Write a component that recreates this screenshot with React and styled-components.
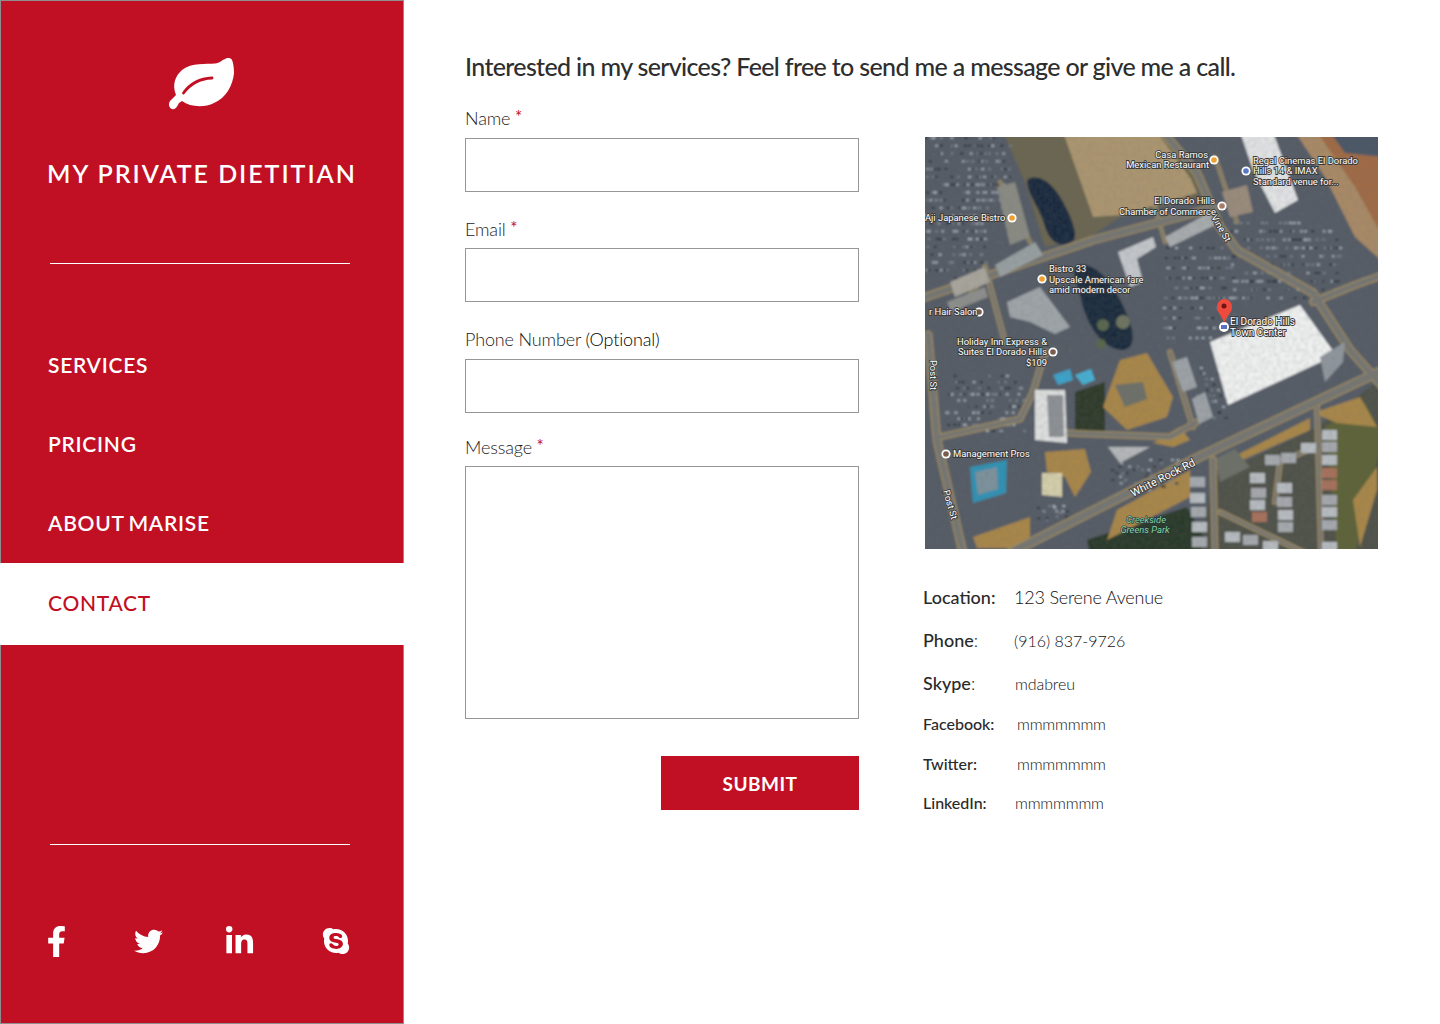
import React from "react";
import styled, { createGlobalStyle } from "styled-components";
import { FaFacebookF, FaTwitter, FaLinkedinIn, FaSkype } from "react-icons/fa";

const RED = "#c10f24";

const GlobalStyle = createGlobalStyle`
  html, body { margin: 0; padding: 0; background: #fff; }
  body { font-family: Lato, "Liberation Sans", sans-serif; color: #333; }
  * { box-sizing: border-box; }
`;

const Page = styled.div`
  display: flex;
  width: 1440px;
  height: 1024px;
  overflow: hidden;
`;

const Sidebar = styled.aside`
  width: 404px;
  height: 1024px;
  flex: none;
  display: flex;
  flex-direction: column;
  background: ${RED};
  border: 1px solid #8e8e8e;
  color: #fff;
`;

const Brand = styled.div`
  height: 262px;
  display: flex;
  flex-direction: column;
  align-items: center;
  padding-top: 56px;
`;

const BrandName = styled.h1`
  margin: 47px 0 0;
  font-size: 25px;
  line-height: 30px;
  font-weight: 600;
  letter-spacing: 1.95px;
  white-space: nowrap;
`;

const Divider = styled.hr`
  width: 300px;
  height: 1px;
  margin: 0 0 0 49px;
  border: 0;
  background: #fff;
  flex: none;
`;

const Nav = styled.nav`
  display: flex;
  flex-direction: column;
  margin-top: 62px;
  margin-bottom: 199px;
`;

const NavItem = styled.a`
  display: flex;
  align-items: center;
  height: ${(p) => (p.$active ? 82 : 79)}px;
  margin: ${(p) => (p.$active ? "0 -1px" : "0")};
  padding: ${(p) => (p.$active ? "0 0 4px 48px" : "0 0 3px 47px")};
  font-size: 21px;
  font-weight: ${(p) => (p.$active ? 500 : 600)};
  letter-spacing: 0.72px;
  word-spacing: -1.5px;
  color: ${(p) => (p.$active ? RED : "#fff")};
  background: ${(p) => (p.$active ? "#fff" : "transparent")};
`;

const Socials = styled.div`
  display: grid;
  grid-template-columns: 93px 89.5px 97px 30px;
  justify-items: start;
  align-items: center;
  height: 32px;
  margin: 80px 0 0 40px;
`;

const Main = styled.main`
  flex: 1;
  padding: 51px 0 0 61px;
`;

const Lead = styled.h2`
  margin: 0;
  font-size: 25px;
  line-height: 30px;
  font-weight: 500;
  letter-spacing: -0.66px;
  white-space: nowrap;
  color: #2e2e2e;
`;

const Columns = styled.div`
  display: flex;
  gap: 64px;
  margin-top: 24px;
`;

const Form = styled.form`
  width: 394px;
  flex: none;
  display: flex;
  flex-direction: column;
`;

const Field = styled.label`
  display: flex;
  flex-direction: column;
  margin-bottom: ${(p) => p.$after}px;
  font-size: 18px;
  line-height: 24px;
  font-weight: 300;
  letter-spacing: -0.15px;
  color: #1c1c1c;
`;

const LabelText = styled.span`
  height: ${(p) => p.$h}px;
`;

const Star = styled.span`
  color: ${RED};
  font-weight: 400;
  font-size: 17px;
  vertical-align: 2px;
`;

const Optional = styled.span`
  color: #000;
`;

const TextInput = styled.input`
  width: 394px;
  height: 54px;
  border: 1px solid #969696;
  background: #fff;
  border-radius: 0;
`;

const MessageInput = styled.textarea`
  display: block;
  width: 394px;
  height: 253px;
  border: 1px solid #969696;
  background: #fff;
  border-radius: 0;
  resize: none;
`;

const Submit = styled.button`
  align-self: flex-end;
  width: 198px;
  height: 54px;
  margin-top: 5px;
  border: 0;
  background: ${RED};
  color: #fff;
  font-family: inherit;
  font-size: 19px;
  font-weight: 700;
  letter-spacing: 0.5px;
`;

const Aside = styled.div`
  flex: 1;
  padding-top: 32px;
`;

const MapFrame = styled.svg`
  display: block;
  width: 453px;
  height: 412px;
  margin-left: 2px;
`;

const Details = styled.dl`
  margin: 36px 0 0;
`;

const DetailRow = styled.div`
  display: flex;
  align-items: baseline;
  height: ${(p) => p.$h}px;
`;

const Key = styled.dt`
  width: ${(p) => p.$w}px;
  flex: none;
  font-size: ${(p) => p.$size}px;
  line-height: 24px;
  font-weight: 500;
  color: #2a2a2a;
`;

const Colon = styled.span`
  font-weight: 300;
`;

const Value = styled.dd`
  margin: 0;
  font-size: ${(p) => p.$size}px;
  line-height: 24px;
  font-weight: 300;
  letter-spacing: ${(p) => p.$track}px;
  color: #111;
`;

const Leaf = () => (
  <svg width="68" height="54" viewBox="0 0 68 54" style={{ display: "block" }}>
    <path
      fill="#fff"
      d="M58 1.500C54 3 52 6 47 6.500C38 7.500 24 5 14 13C7 19 4 28 8 38L2 44C0 47 1 51 4 52C7 53 9 50 11 46L14 44C22 50 36 51 46 46C58 41 65 28 66 16C66 10 65 5 64 3C63 1 60 .5 58 1.500Z"
    />
    <path
      fill="none"
      stroke={RED}
      strokeWidth="2.800"
      strokeLinecap="round"
      d="M15.500 36C22 27 31 21.500 44 21"
    />
  </svg>
);

// seeded so the parked cars stay in the same place on every render
const seeded = (n) => {
  const x = Math.sin(n * 91.17) * 43758.5453;
  return x - Math.floor(x);
};

const lots = [
  { x: 0, y: 0, w: 85, h: 70, n: 170 },
  { x: 0, y: 70, w: 60, h: 70, n: 100 },
  { x: 238, y: 110, w: 70, h: 90, n: 170 },
  { x: 305, y: 85, w: 110, h: 75, n: 190 },
  { x: 20, y: 238, w: 80, h: 55, n: 130 },
  { x: 186, y: 322, w: 66, h: 30, n: 50 },
  { x: 112, y: 368, w: 42, h: 16, n: 20 },
  { x: 270, y: 230, w: 30, h: 50, n: 40 },
];

const homes = [
  [265, 340], [265, 356], [266, 370], [267, 385], [267, 400],
  [325, 336], [326, 351], [325, 363], [327, 375],
  [352, 346], [352, 360], [353, 373], [353, 385],
  [397, 293], [397, 305], [397, 318], [397, 331], [397, 343],
  [397, 358], [397, 370], [397, 383], [397, 405],
  [356, 316], [376, 306], [340, 318], [300, 395], [318, 398], [338, 404],
];

const tan = [
  "288,330 385,281 385,293 295,333",
  "192,373 265,333 265,360 208,390 182,403",
  "388,276 435,260 452,290 412,286",
  "428,363 452,330 452,353 435,410",
  "48,400 105,380 105,411 52,411",
  "178,270 195,223 222,216 248,260 242,280 202,293",
  "228,306 255,290 265,303 248,310",
  "120,315 160,312 166,335 150,360 140,340 122,335",
];

const greys = [
  "190,248 218,245 222,262 200,270",
  "290,322 310,312 325,330 295,345",
];

const labels = [
  ["Casa Ramos", 283, 21, "end"],
  ["Mexican Restaurant", 284, 31, "end"],
  ["Regal Cinemas El Dorado", 328, 27, "start"],
  ["Hills 14 & IMAX", 328, 37, "start"],
  ["Standard venue for...", 328, 48, "start"],
  ["El Dorado Hills", 290, 67, "end"],
  ["Chamber of Commerce", 291, 78, "end"],
  ["Aji Japanese Bistro", 0, 84, "start"],
  ["Bistro 33", 124, 135, "start"],
  ["Upscale American fare", 124, 146, "start"],
  ["amid modern decor", 124, 156, "start"],
  ["r Hair Salon", 4, 178, "start"],
  ["Holiday Inn Express &", 122, 208, "end"],
  ["Suites El Dorado Hills", 122, 218, "end"],
  ["$109", 122, 229, "end"],
  ["Management Pros", 28, 320, "start"],
];

const roads = [
  { d: "M-5 162L168 103L288 71", w: 6 },
  { d: "M238 -5L272 36L295 90L312 113L388 156L425 213L458 250", w: 6 },
  { d: "M85 416L278 318L458 233", w: 7 },
  { d: "M3 198L12 303L38 416", w: 6 },
  { d: "M15 300L95 282L108 255L120 215", w: 4 },
  { d: "M60 130L80 205", w: 3 },
  { d: "M388 165L430 148L458 138", w: 5 },
  { d: "M140 296L245 300L272 285", w: 4 },
  { d: "M288 322L290 416", w: 4 },
  { d: "M392 270L396 416", w: 3 },
  { d: "M295 375L380 416", w: 3 },
  { d: "M350 365L355 325L395 308", w: 3 },
  { d: "M245 215L268 290", w: 3 },
  // walkways round the shops at the top
  { d: "M75 45L105 105", w: 1.500 },
  { d: "M290 20L312 85", w: 1.500 },
  { d: "M230 70L240 105", w: 1.500 },
  { d: "M60 140L30 175", w: 1.500 },
];

const MapText = styled.text`
  font-family: Roboto, sans-serif;
  font-size: ${(p) => p.$size || 9.4}px;
  font-style: ${(p) => (p.$park ? "italic" : "normal")};
  fill: ${(p) => (p.$park ? "#86d596" : "#fff")};
  stroke: ${(p) => (p.$park ? "#234" : "#3a3a3a")};
  stroke-width: ${(p) => (p.$park ? 1.2 : 1.8)}px;
  paint-order: stroke;
`;

const PlaceDot = ({ x, y, fill }) => (
  <g>
    <circle cx={x} cy={y} r="4.600" fill="#fff" />
    <circle cx={x} cy={y} r="2.800" fill={fill} />
  </g>
);

const MapPicture = () => (
  <MapFrame viewBox="0 0 453 412">
    <defs>
      <filter id="soft" x="0" y="0" width="100%" height="100%">
        <feGaussianBlur stdDeviation="0.8" edgeMode="duplicate" />
      </filter>
      <filter id="grain" x="0" y="0" width="100%" height="100%">
        <feTurbulence type="fractalNoise" baseFrequency="0.25" numOctaves="3" seed="4" />
        <feColorMatrix values="0 0 0 0 0.15  0 0 0 0 0.15  0 0 0 0 0.15  1.600 0 0 0 -0.500" />
      </filter>
    </defs>
    <g filter="url(#soft)">
      <rect x="-5" y="-5" width="463" height="422" fill="#555c66" />
      {/* field and dry ground */}
      <polygon points="78,-5 240,-5 272,42 274,60 195,80 165,100 120,110 100,45" fill="#6b6650" />
      <polygon points="138,-5 232,-5 266,42 272,56 198,78 168,80" fill="#ac9670" />
      <polygon points="370,-5 458,-5 458,125 430,100 400,40" fill="#a98a66" />
      <polygon points="392,-5 458,-5 458,100 430,50" fill="#a06a45" />
      <polygon points="405,-5 458,-5 458,20 420,16" fill="#4b5766" />
      <polygon points="150,255 180,245 180,300 150,298" fill="#2f3b2b" />
      <polygon points="162,403 262,370 288,416 165,416" fill="#2a3a2b" />
      <polygon points="288,340 392,290 458,240 458,416 275,416" fill="#4f524a" />
      <polygon points="400,290 440,265 458,300 430,416 412,416" fill="#5d6338" />
      {tan.map((points) => (
        <polygon key={points} points={points} fill="#a98749" />
      ))}
      {greys.map((points) => (
        <polygon key={points} points={points} fill="#6d7068" />
      ))}

      {/* parking */}
      {lots.map((lot, i) =>
        Array.from({ length: lot.n }, (_, k) => (
          <rect
            key={`${i}-${k}`}
            x={lot.x + seeded(i * 100 + k) * lot.w}
            y={lot.y + Math.round(seeded(i * 200 + k + 7) * 9) * (lot.h / 9)}
            width="2.600"
            height="2"
            fill={k % 3 === 0 ? "#272c34" : k % 3 === 1 ? "#aab2bd" : "#7a8390"}
          />
        ))
      )}

      {/* ponds */}
      <path d="M103 42c14-6 28 8 37 27 8 15 12 28 9 34-13 11-26 1-30-17-4-14-20-34-16-44Z" fill="#1b2a40" />
      <path d="M153 128c22-3 40 26 50 52 8 20 6 34-8 33-20-4-34-26-40-55-3-12-10-26-2-30Z" fill="#1c2c3e" />
      <circle cx="178" cy="188" r="6" fill="#59664e" />
      <circle cx="198" cy="185" r="7" fill="#6d7460" />
      <circle cx="176" cy="207" r="5" fill="#59664e" />

      {/* roads, tan verge under grey tarmac */}
      <g fill="none" strokeLinejoin="round" strokeLinecap="round">
        {roads.map((r) => (
          <path key={`v${r.d}`} d={r.d} stroke="#9c8a62" strokeWidth={r.w + 3} />
        ))}
        {roads.map((r) => (
          <path key={r.d} d={r.d} stroke="#757672" strokeWidth={r.w} />
        ))}
      </g>

      {/* buildings */}
      <polygon points="285,205 375,168 411,218 303,268" fill="#f0f2f2" />
      <polygon points="315,-5 348,-5 373,63 350,76 328,33" fill="#e2e4e6" />
      <polygon points="193,115 228,100 231,110 212,122 218,145 205,150" fill="#c4c8cc" />
      <polygon points="240,100 285,75 290,88 245,110" fill="#a9adaf" />
      <polygon points="82,165 115,150 145,190 130,197 105,185 85,180" fill="#9fa5a9" />
      <polygon points="70,128 110,105 118,118 75,140" fill="#99a0a2" />
      <polygon points="25,145 60,130 65,145 30,160" fill="#a9a69c" />
      <polygon points="22,165 60,150 63,160 26,175" fill="#8d8f8d" />
      <polygon points="72,50 90,45 105,100 85,108" fill="#8a8b83" />
      <polygon points="110,253 140,253 142,306 110,303" fill="#dfe1e1" />
      <polygon points="122,258 138,258 139,300 124,300" fill="#8d9195" />
      <polygon points="117,336 137,336 137,360 117,358" fill="#d6d0ac" />
      <polygon points="183,310 225,310 195,326" fill="#b5b8ba" />
      <polygon points="247,225 262,220 272,250 258,255" fill="#9da3a8" />
      <polygon points="267,262 280,255 288,280 274,287" fill="#9da3a8" />
      <polygon points="45,330 82,323 81,356 48,366" fill="#2f92b5" />
      <polygon points="50,335 72,330 73,352 53,358" fill="#7c929d" />
      <polygon points="128,238 145,232 148,243 133,248" fill="#3ca3cc" />
      <polygon points="150,238 166,232 170,243 158,248" fill="#45b1d4" />
      <polygon points="395,220 420,205 418,225 400,245" fill="#8f979d" />
      <polygon points="297,55 322,48 328,75 305,80" fill="#9a8c7c" />
      {homes.map(([x, y], i) => (
        <rect
          key={i}
          x={x}
          y={y}
          width="15"
          height="10"
          fill={i === 16 || i === 17 || i === 8 ? "#a8715c" : i % 2 ? "#b8bdc2" : "#a6aaaf"}
        />
      ))}
      <rect width="453" height="412" filter="url(#grain)" opacity="0.22" />
    </g>

    {/* pin */}
    <circle cx="299" cy="190" r="5" fill="#fff" />
    <rect x="296" y="188" width="6" height="4" fill="#5a6fc7" />
    <path d="M299 186c-2-8-7-10-7-16a7 7.500 0 0 1 15 0c0 6-5 8-8 16Z" fill="#ee4b3e" />
    <circle cx="299" cy="169" r="2.500" fill="#6d1510" />

    <PlaceDot x={289} y={23} fill="#f0a030" />
    <PlaceDot x={321} y={34} fill="#5a78c8" />
    <PlaceDot x={297} y={69} fill="#a77b68" />
    <PlaceDot x={87} y={81} fill="#f0a030" />
    <PlaceDot x={117} y={142} fill="#f0a030" />
    <PlaceDot x={54} y={175} fill="#7a5c4c" />
    <PlaceDot x={128} y={215} fill="#7a5c4c" />
    <PlaceDot x={21} y={317} fill="#7a5c4c" />

    <MapText x="286" y="80" transform="rotate(60 286 80)">Vine St</MapText>
    {labels.map(([text, x, y, anchor]) => (
      <MapText key={text} x={x} y={y} textAnchor={anchor}>
        {text}
      </MapText>
    ))}
    <MapText x="305" y="188" $size={10}>El Dorado Hills</MapText>
    <MapText x="305" y="199" $size={10}>Town Center</MapText>
    <MapText x="208" y="360" transform="rotate(-27 208 360)" $size={11}>White Rock Rd</MapText>
    <MapText x="5" y="223" transform="rotate(90 5 223)">Post St</MapText>
    <MapText x="18" y="354" transform="rotate(74 18 354)">Post St</MapText>
    <MapText x="221" y="386" textAnchor="middle" $park>Creekside</MapText>
    <MapText x="220" y="396" textAnchor="middle" $park>Greens Park</MapText>
  </MapFrame>
);

const details = [
  { k: "Location:", v: "123 Serene Avenue", h: 43, w: 91, ks: 18, vs: 18, t: -0.2 },
  { k: "Phone", colon: true, v: "(916) 837-9726", h: 43, w: 91, ks: 18, vs: 16, t: 0 },
  { k: "Skype", colon: true, v: "mdabreu", h: 41, w: 92, ks: 18, vs: 16, t: -0.1 },
  { k: "Facebook:", v: "mmmmmmm", h: 40, w: 94, ks: 16, vs: 16, t: -0.2 },
  { k: "Twitter:", v: "mmmmmmm", h: 39, w: 94, ks: 16, vs: 16, t: -0.2 },
  { k: "LinkedIn:", v: "mmmmmmm", h: 24, w: 92, ks: 16, vs: 16, t: -0.2 },
];

export default function App() {
  return (
    <Page>
      <GlobalStyle />
      <Sidebar>
        <Brand>
          <Leaf />
          <BrandName>MY PRIVATE DIETITIAN</BrandName>
        </Brand>
        <Divider />
        <Nav>
          <NavItem>SERVICES</NavItem>
          <NavItem>PRICING</NavItem>
          <NavItem>ABOUT MARISE</NavItem>
          <NavItem $active>CONTACT</NavItem>
        </Nav>
        <Divider />
        <Socials>
          <FaFacebookF size={31} />
          <FaTwitter size={29} />
          <FaLinkedinIn size={31} />
          <FaSkype size={30} />
        </Socials>
      </Sidebar>
      <Main>
        <Lead>Interested in my services? Feel free to send me a message or give me a call.</Lead>
        <Columns>
          <Form>
            <Field $after={24}>
              <LabelText $h={33}>Name <Star>*</Star></LabelText>
              <TextInput type="text" />
            </Field>
            <Field $after={25}>
              <LabelText $h={32}>Email <Star>*</Star></LabelText>
              <TextInput type="text" />
            </Field>
            <Field $after={21}>
              <LabelText $h={32}>Phone Number <Optional>(Optional)</Optional></LabelText>
              <TextInput type="text" />
            </Field>
            <Field $after={32}>
              <LabelText $h={32}>Message <Star>*</Star></LabelText>
              <MessageInput />
            </Field>
            <Submit type="button">SUBMIT</Submit>
          </Form>
          <Aside>
            <MapPicture />
            <Details>
              {details.map((d) => (
                <DetailRow key={d.k} $h={d.h}>
                  <Key $w={d.w} $size={d.ks}>
                    {d.k}
                    {d.colon && <Colon>:</Colon>}
                  </Key>
                  <Value $size={d.vs} $track={d.t}>{d.v}</Value>
                </DetailRow>
              ))}
            </Details>
          </Aside>
        </Columns>
      </Main>
    </Page>
  );
}
